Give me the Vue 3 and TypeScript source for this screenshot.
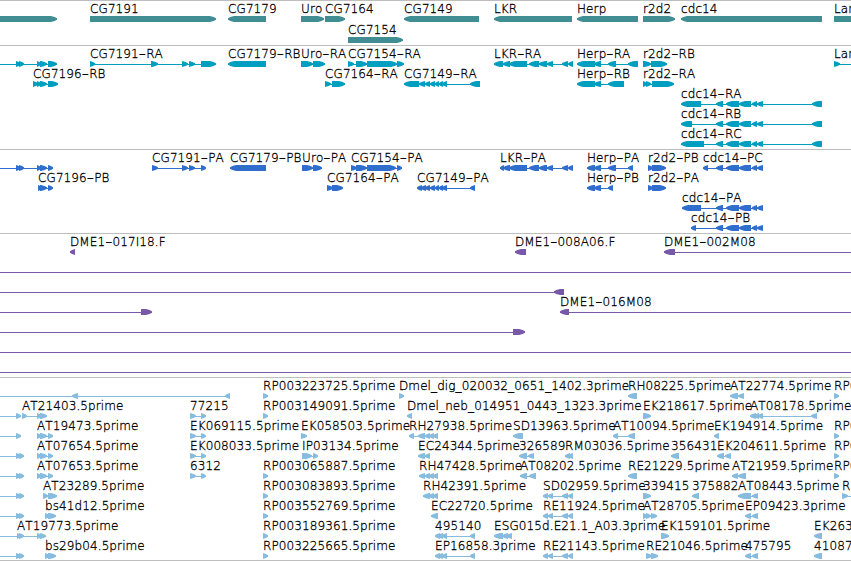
<script setup lang="ts">
type Strand = '+' | '-'
type Block = [number, number]

interface Feature {
  row: number
  label: string
  strand: Strand
  blocks: Block[]
  start: number
  end: number
}

interface Track {
  name: string
  height: number
  pitch: number
  features: Feature[]
}

const VIEW_WIDTH = 851

// start and end only need to be given when the connector runs past the blocks
const feat = (
  row: number,
  label: string,
  strand: Strand,
  blocks: Block[],
  start?: number,
  end?: number
): Feature => ({
  row,
  label,
  strand,
  blocks,
  start: start ?? blocks[0][0],
  end: end ?? blocks[blocks.length - 1][1]
})

const cdc14Exons: Block[] = [[716, 723], [726, 739], [739, 751], [752, 757], [757, 763]]
const lkrExons: Block[] = [[503, 510], [509, 527], [529, 539], [539, 547], [547, 553], [562, 568], [568, 573]]
const shortPair: Block[] = [[190, 196], [201, 206]]
const leftExons: Block[] = [[16, 21], [19, 24]]

const genes: Feature[] = [
  feat(0, '', '+', [[-10, 57]]),
  feat(0, 'CG7191', '+', [[90, 216]]),
  feat(0, 'CG7179', '-', [[228, 266]]),
  feat(0, 'Uro', '+', [[301, 324]]),
  feat(0, 'CG7164', '+', [[325, 345]]),
  feat(1, 'CG7154', '+', [[348, 403]]),
  feat(0, 'CG7149', '-', [[404, 479]]),
  feat(0, 'LKR', '-', [[494, 572]]),
  feat(0, 'Herp', '-', [[577, 638]]),
  feat(0, 'r2d2', '+', [[643, 675]]),
  feat(0, 'cdc14', '-', [[681, 822]]),
  feat(0, 'Lar', '+', [[834, 880]])
]

const transcripts: Feature[] = [
  feat(0, '', '+', [...leftExons, [37, 41], [40, 47], [48, 57]], 0),
  feat(0, 'CG7191-RA', '+', [[90, 95], [151, 158], [182, 188], [189, 195], [201, 216]]),
  feat(0, 'CG7179-RB', '-', [[228, 266]]),
  feat(0, 'Uro-RA', '+', [[301, 313], [313, 325]]),
  feat(0, 'CG7154-RA', '+', [[348, 354], [356, 367], [367, 397], [397, 404]]),
  feat(0, 'LKR-RA', '-', [[494, 503], ...lkrExons]),
  feat(0, 'Herp-RA', '-', [[577, 595], [594, 601], [608, 616], [628, 638]]),
  feat(0, 'r2d2-RB', '+', [[643, 651], [651, 667]]),
  feat(0, 'Lar', '+', [[834, 840]], 834, VIEW_WIDTH),
  feat(1, 'CG7196-RB', '+', [[33, 38], [37, 41], [40, 47], [48, 58]]),
  feat(1, 'CG7164-RA', '+', [[325, 331], [332, 345]]),
  feat(1, 'CG7149-RA', '-', [[404, 419], [419, 425], [425, 430], [430, 435], [435, 439], [439, 443], [442, 447], [470, 480]]),
  feat(1, 'Herp-RB', '-', [[577, 595], [594, 601], [608, 624]]),
  feat(1, 'r2d2-RA', '+', [[643, 647], [646, 651], [652, 674]]),
  feat(2, 'cdc14-RA', '-', [[681, 701], ...cdc14Exons, [812, 822]]),
  feat(3, 'cdc14-RB', '-', [[681, 692], ...cdc14Exons, [812, 822]]),
  feat(4, 'cdc14-RC', '-', [[681, 704], ...cdc14Exons, [812, 822]])
]

const proteins: Feature[] = [
  feat(0, '', '+', [...leftExons, [37, 41], [40, 47], [48, 53]], 0),
  feat(0, 'CG7191-PA', '+', [[152, 158], [182, 188], [189, 195], [201, 206]]),
  feat(0, 'CG7179-PB', '-', [[230, 266]]),
  feat(0, 'Uro-PA', '+', [[302, 313], [313, 322]]),
  feat(0, 'CG7154-PA', '+', [[351, 357], [356, 367], [367, 396], [397, 402]]),
  feat(0, 'LKR-PA', '-', [[500, 504], ...lkrExons]),
  feat(0, 'Herp-PA', '-', [[587, 595], [594, 601], [608, 616], [628, 633]]),
  feat(0, 'r2d2-PB', '+', [[648, 653], [652, 666]]),
  feat(0, 'cdc14-PC', '-', [[703, 708], ...cdc14Exons]),
  feat(1, 'CG7196-PB', '+', [[38, 42], [40, 47], [48, 53]]),
  feat(1, 'CG7164-PA', '+', [[327, 333], [332, 343]]),
  feat(1, 'CG7149-PA', '-', [[417, 422], [421, 426], [425, 430], [430, 435], [435, 439], [439, 443], [442, 447], [470, 475]]),
  feat(1, 'Herp-PB', '-', [[587, 595], [594, 601], [608, 613]]),
  feat(1, 'r2d2-PA', '+', [[648, 653], [652, 666]]),
  feat(2, 'cdc14-PA', '-', [[682, 701], ...cdc14Exons]),
  feat(3, 'cdc14-PB', '-', [[691, 696], ...cdc14Exons])
]

const clones: Feature[] = [
  feat(0, 'DME1-017I18.F', '-', [[70, 75]]),
  feat(0, 'DME1-008A06.F', '-', [[515, 526]]),
  feat(0, 'DME1-002M08', '-', [[664, 675]], 664, VIEW_WIDTH),
  feat(1, '', '+', [], 0, VIEW_WIDTH),
  feat(2, '', '-', [[554, 564]], 0),
  feat(3, '', '+', [[141, 152]], 0),
  feat(3, 'DME1-016M08', '-', [[560, 569]], 560, VIEW_WIDTH),
  feat(4, '', '+', [[513, 525]], 0),
  feat(5, '', '+', [], 0, VIEW_WIDTH),
  feat(6, '', '+', [], 0, VIEW_WIDTH)
]

const ests: Feature[] = [
  feat(0, '', '-', [[72, 78], [225, 230]], 0),
  feat(0, 'RP003223725.5prime', '+', [[263, 268]]),
  feat(0, 'Dmel_dig_020032_0651_1402.3prime', '+', [[399, 404]]),
  feat(0, 'RH08225.5prime', '-', [[628, 637]]),
  feat(0, 'AT22774.5prime', '-', [[730, 738], [738, 744]]),
  feat(0, 'RP0', '+', [[834, 839]]),

  feat(1, '', '+', [[16, 21]], 0),
  feat(1, 'AT21403.5prime', '+', [[22, 27], [37, 42], [40, 47]]),
  feat(1, '77215', '+', shortPair),
  feat(1, 'RP003149091.5prime', '+', [[263, 268]]),
  feat(1, 'Dmel_neb_014951_0443_1323.3prime', '-', [[407, 412]]),
  feat(1, 'EK218617.5prime', '+', [[643, 651]]),
  feat(1, 'AT08178.5prime', '-', [[750, 756], [754, 759], [758, 763], [811, 817]]),

  feat(2, '', '+', [[16, 21]], 0),
  feat(2, 'AT19473.5prime', '+', [[37, 41], [40, 47], [48, 53]]),
  feat(2, 'EK069115.5prime', '+', shortPair),
  feat(2, 'EK058503.5prime', '+', [[301, 307]]),
  feat(2, 'RH27938.5prime', '-', [[409, 414], [418, 425], [425, 430], [429, 434], [433, 438]]),
  feat(2, 'SD13963.5prime', '-', [[513, 523]]),
  feat(2, 'AT10094.5prime', '-', [[613, 618], [628, 635]]),
  feat(2, 'EK194914.5prime', '-', [[714, 719]]),
  feat(2, 'RP0', '+', [[834, 839]]),

  feat(3, '', '+', leftExons, 0),
  feat(3, 'AT07654.5prime', '+', [[37, 41], [40, 47], [48, 53]]),
  feat(3, 'EK008033.5prime', '+', shortPair),
  feat(3, 'IP03134.5prime', '+', [[302, 312], [313, 318]]),
  feat(3, 'EC24344.5prime', '-', [[418, 425], [425, 430]]),
  feat(3, '326589', '-', [[519, 527], [528, 534]]),
  feat(3, 'RM03036.5prime', '-', [[565, 570], [568, 573]]),
  feat(3, '356431', '-', [[671, 679]]),
  feat(3, 'EK204611.5prime', '-', [[717, 724], [725, 731]]),
  feat(3, 'RP0', '+', [[834, 839]]),

  feat(4, '', '+', leftExons, 0),
  feat(4, 'AT07653.5prime', '+', [[37, 41], [40, 47], [48, 53]]),
  feat(4, '6312', '+', shortPair),
  feat(4, 'RP003065887.5prime', '+', [[263, 268]]),
  feat(4, 'RH47428.5prime', '-', [[419, 425], [425, 430], [429, 434], [433, 438]]),
  feat(4, 'AT08202.5prime', '-', [[520, 527], [529, 536]]),
  feat(4, 'RE21229.5prime', '-', [[628, 637]]),
  feat(4, 'AT21959.5prime', '-', [[732, 738], [738, 746]]),
  feat(4, 'RP0', '+', [[834, 839]]),

  feat(5, '', '+', leftExons, 0),
  feat(5, 'AT23289.5prime', '+', [[43, 48], [48, 57]]),
  feat(5, 'RP003083893.5prime', '+', [[263, 268]]),
  feat(5, 'RH42391.5prime', '-', [[423, 430], [429, 434], [433, 438]]),
  feat(5, 'SD02959.5prime', '-', [[543, 548], [548, 553], [562, 568], [568, 573]]),
  feat(5, '339415', '+', [[643, 651]]),
  feat(5, '375882', '-', [[692, 699]]),
  feat(5, 'AT08443.5prime', '-', [[738, 751], [752, 758]]),
  feat(5, 'R', '+', [[842, 848]], 842, VIEW_WIDTH),

  feat(6, '', '+', leftExons, 0),
  feat(6, 'bs41d12.5prime', '+', [[45, 50], [48, 56]]),
  feat(6, 'RP003552769.5prime', '+', [[263, 268]]),
  feat(6, 'EC22720.5prime', '-', [[431, 438]]),
  feat(6, 'RE11924.5prime', '-', [[543, 548], [548, 553], [562, 568], [568, 573]]),
  feat(6, 'AT28705.5prime', '+', [[643, 647], [646, 651], [651, 657]]),
  feat(6, 'EP09423.3prime', '-', [[745, 751], [752, 758]]),

  feat(7, 'AT19773.5prime', '+', [[17, 21], [19, 24], [37, 42], [40, 46]], 0),
  feat(7, 'RP003189361.5prime', '+', [[263, 268]]),
  feat(7, '495140', '-', [[435, 440], [438, 443], [442, 447], [470, 475]]),
  feat(7, 'ESG015d.E21.1_A03.3prime', '-', [[494, 503], [502, 508], [506, 512]]),
  feat(7, 'EK159101.5prime', '+', [[661, 669]]),
  feat(7, 'EK263', '-', [[814, 822]]),

  feat(8, '', '+', leftExons, 0),
  feat(8, 'bs29b04.5prime', '+', [[45, 50], [48, 56]]),
  feat(8, 'RP003225665.5prime', '+', [[263, 268]]),
  feat(8, 'EP16858.3prime', '-', [[435, 440], [438, 443], [442, 447], [470, 475]]),
  feat(8, 'RE21143.5prime', '-', [[543, 548], [548, 553], [562, 568], [568, 573]]),
  feat(8, 'RE21046.5prime', '+', [[646, 652], [651, 658]]),
  feat(8, '475795', '-', [[745, 751], [752, 758]]),
  feat(8, '41087', '-', [[814, 822]])
]

const tracks: Track[] = [
  { name: 'genes', height: 44, pitch: 21, features: genes },
  { name: 'transcripts', height: 103, pitch: 20, features: transcripts },
  { name: 'proteins', height: 83, pitch: 20, features: proteins },
  { name: 'clones', height: 143, pitch: 20, features: clones },
  { name: 'ests', height: 182, pitch: 20, features: ests }
]

// Labels sit over the first block, not at the start of the connector
const labelX = (feature: Feature) => feature.blocks[0]?.[0] ?? feature.start

// Everything before the hyphen, and everything after it
const labelParts = (label: string) => label.split('-')

const arrow = ([from, to]: Block, strand: Strand) => {
  const head = Math.min(6, to - from)
  const [tip, neck, tail, dir] = strand === '+' ? [to, to - head, from, 1] : [from, from + head, to, -1]
  const shoulder = neck + dir * head * 0.6
  return [
    [tail, 15],
    [neck, 15],
    [shoulder, 16],
    [tip, 17.3],
    [tip, 18.7],
    [shoulder, 20],
    [neck, 21],
    [tail, 21]
  ].join(' ')
}
</script>

<template>
  <main class="browser">
    <section v-for="track in tracks" :key="track.name" class="track" :class="track.name">
      <svg :width="VIEW_WIDTH" :height="track.height">
        <g
          v-for="(feature, i) in track.features"
          :key="i"
          :transform="`translate(0 ${feature.row * track.pitch})`"
        >
          <rect
            class="connector"
            :x="feature.start"
            y="18"
            :width="feature.end - feature.start"
            height="1"
          />
          <polygon
            v-for="(block, j) in feature.blocks"
            :key="j"
            :points="arrow(block, feature.strand)"
          />
          <text v-if="feature.label" :x="labelX(feature)" y="12"><template v-for="(part, k) in labelParts(feature.label)" :key="k"><tspan v-if="k > 0" textLength="7.3" lengthAdjust="spacingAndGlyphs">-</tspan>{{ part }}</template></text>
        </g>
      </svg>
    </section>
  </main>
</template>

<style>
body {
  margin: 0;
  background: #fff;
}
</style>

<style scoped>
.browser {
  width: 851px;
  height: 561px;
  box-sizing: border-box;
  overflow: hidden;
  background: #fff;
}

.track {
  border-top: 1px solid #bebebe;
}

.track:last-child {
  border-bottom: 1px solid #bebebe;
}

.track svg {
  display: block;
  overflow: hidden;
}

.genes {
  fill: #408e94;
}

.transcripts {
  fill: #009fc0;
}

.proteins {
  fill: #306ece;
}

.clones {
  fill: #7858a8;
}

.ests {
  fill: #88bcde;
}

text {
  fill: #000;
  stroke: #000;
  stroke-width: 0.3px;
  font-family: 'DejaVu Sans', sans-serif;
  font-size: 12px;
  font-weight: 200;
  font-kerning: none;
  letter-spacing: 0.1px;
}
</style>
